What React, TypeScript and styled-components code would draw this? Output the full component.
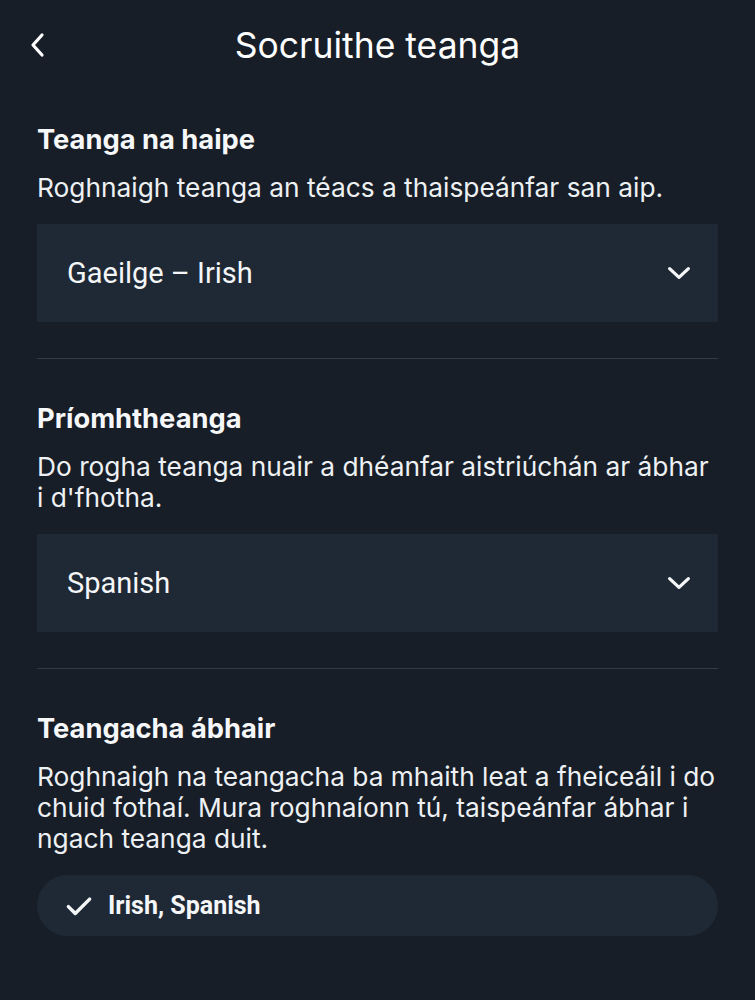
import { createGlobalStyle, styled } from "styled-components";

const GlobalStyle = createGlobalStyle`
  html, body {
    margin: 0;
    padding: 0;
    background: #181e27;
  }
  body {
    font-family: Roboto, "Noto Sans", sans-serif;
    color: #f4f6f8;
  }
`;

const Page = styled.div`
  min-height: 1000px;
  background: #181e27;
  display: flex;
  flex-direction: column;
`;

const Header = styled.header`
  display: grid;
  grid-template-columns: 72px 1fr 72px;
  align-items: center;
  height: 90px;
`;

const BackButton = styled.button`
  display: flex;
  align-items: center;
  justify-content: center;
  width: 72px;
  height: 90px;
  padding: 0 0 0 4px;
  background: transparent;
  border: none;
  color: #ffffff;
  justify-self: start;
`;

const Title = styled.h1`
  margin: 0;
  text-align: center;
  font-family: Inter, sans-serif;
  font-weight: 400;
  font-size: 35.5px;
  color: #ffffff;
`;

const Main = styled.main`
  display: flex;
  flex-direction: column;
  padding: 0 37px;
`;

const Section = styled.section<{ $first?: boolean; $last?: boolean }>`
  display: flex;
  flex-direction: column;
  padding: ${(p) => (p.$first ? "33px" : "43px")} 0 36px;
  border-bottom: ${(p) => (p.$last ? "none" : "1px solid #323b46")};
`;

const Heading = styled.h2`
  margin: 0 0 15px;
  font-family: Inter, sans-serif;
  font-weight: 700;
  font-size: 27.3px;
  line-height: 34px;
  color: #f6f7f9;
`;

const Description = styled.p`
  margin: 0 0 21px;
  font-family: Inter, sans-serif;
  font-size: 26.3px;
  line-height: 31px;
  color: #eef1f4;
`;

const Select = styled.div`
  display: flex;
  align-items: center;
  justify-content: space-between;
  height: 98px;
  padding: 0 24px 0 30px;
  background: #1f2935;
  font-family: Roboto, sans-serif;
  font-size: 29px;
  color: #f4f6f8;
`;

const Chip = styled.div`
  display: flex;
  align-items: center;
  gap: 14px;
  height: 61px;
  padding: 0 27px;
  border-radius: 31px;
  background: #1f2935;
  font-family: Roboto, sans-serif;
  font-weight: 700;
  font-size: 25px;
  color: #f4f6f8;
`;

function Chevron() {
  return (
    <svg width="30" height="30" viewBox="0 0 24 24" fill="none" stroke="currentColor" strokeWidth="2.6" strokeLinecap="round" strokeLinejoin="round">
      <path d="M4.5 8.5 12 15.5 19.5 8.5" />
    </svg>
  );
}

export default function App() {
  return (
    <Page>
      <GlobalStyle />
      <Header>
        <BackButton aria-label="Back">
          <svg width="20" height="28" viewBox="0 0 20 28" fill="none" stroke="currentColor" strokeWidth="3.2" strokeLinecap="round" strokeLinejoin="round">
            <path d="M14 4 5 14 14 24" />
          </svg>
        </BackButton>
        <Title>Socruithe teanga</Title>
        <span />
      </Header>
      <Main>
        <Section $first>
          <Heading>Teanga na haipe</Heading>
          <Description>Roghnaigh teanga an téacs a thaispeánfar san aip.</Description>
          <Select>
            Gaeilge – Irish
            <Chevron />
          </Select>
        </Section>
        <Section>
          <Heading>Príomhtheanga</Heading>
          <Description>
            Do rogha teanga nuair a dhéanfar aistriúchán ar ábhar i d'fhotha.
          </Description>
          <Select>
            Spanish
            <Chevron />
          </Select>
        </Section>
        <Section $last>
          <Heading>Teangacha ábhair</Heading>
          <Description>
            Roghnaigh na teangacha ba mhaith leat a fheiceáil i do chuid fothaí. Mura roghnaíonn tú, taispeánfar ábhar i ngach teanga duit.
          </Description>
          <Chip>
            <svg width="30" height="30" viewBox="0 0 24 24" fill="none" stroke="currentColor" strokeWidth="2.8" strokeLinecap="round" strokeLinejoin="round">
              <path d="M3.5 12.5 9 18 20.5 6.5" />
            </svg>
            Irish, Spanish
          </Chip>
        </Section>
      </Main>
    </Page>
  );
}
